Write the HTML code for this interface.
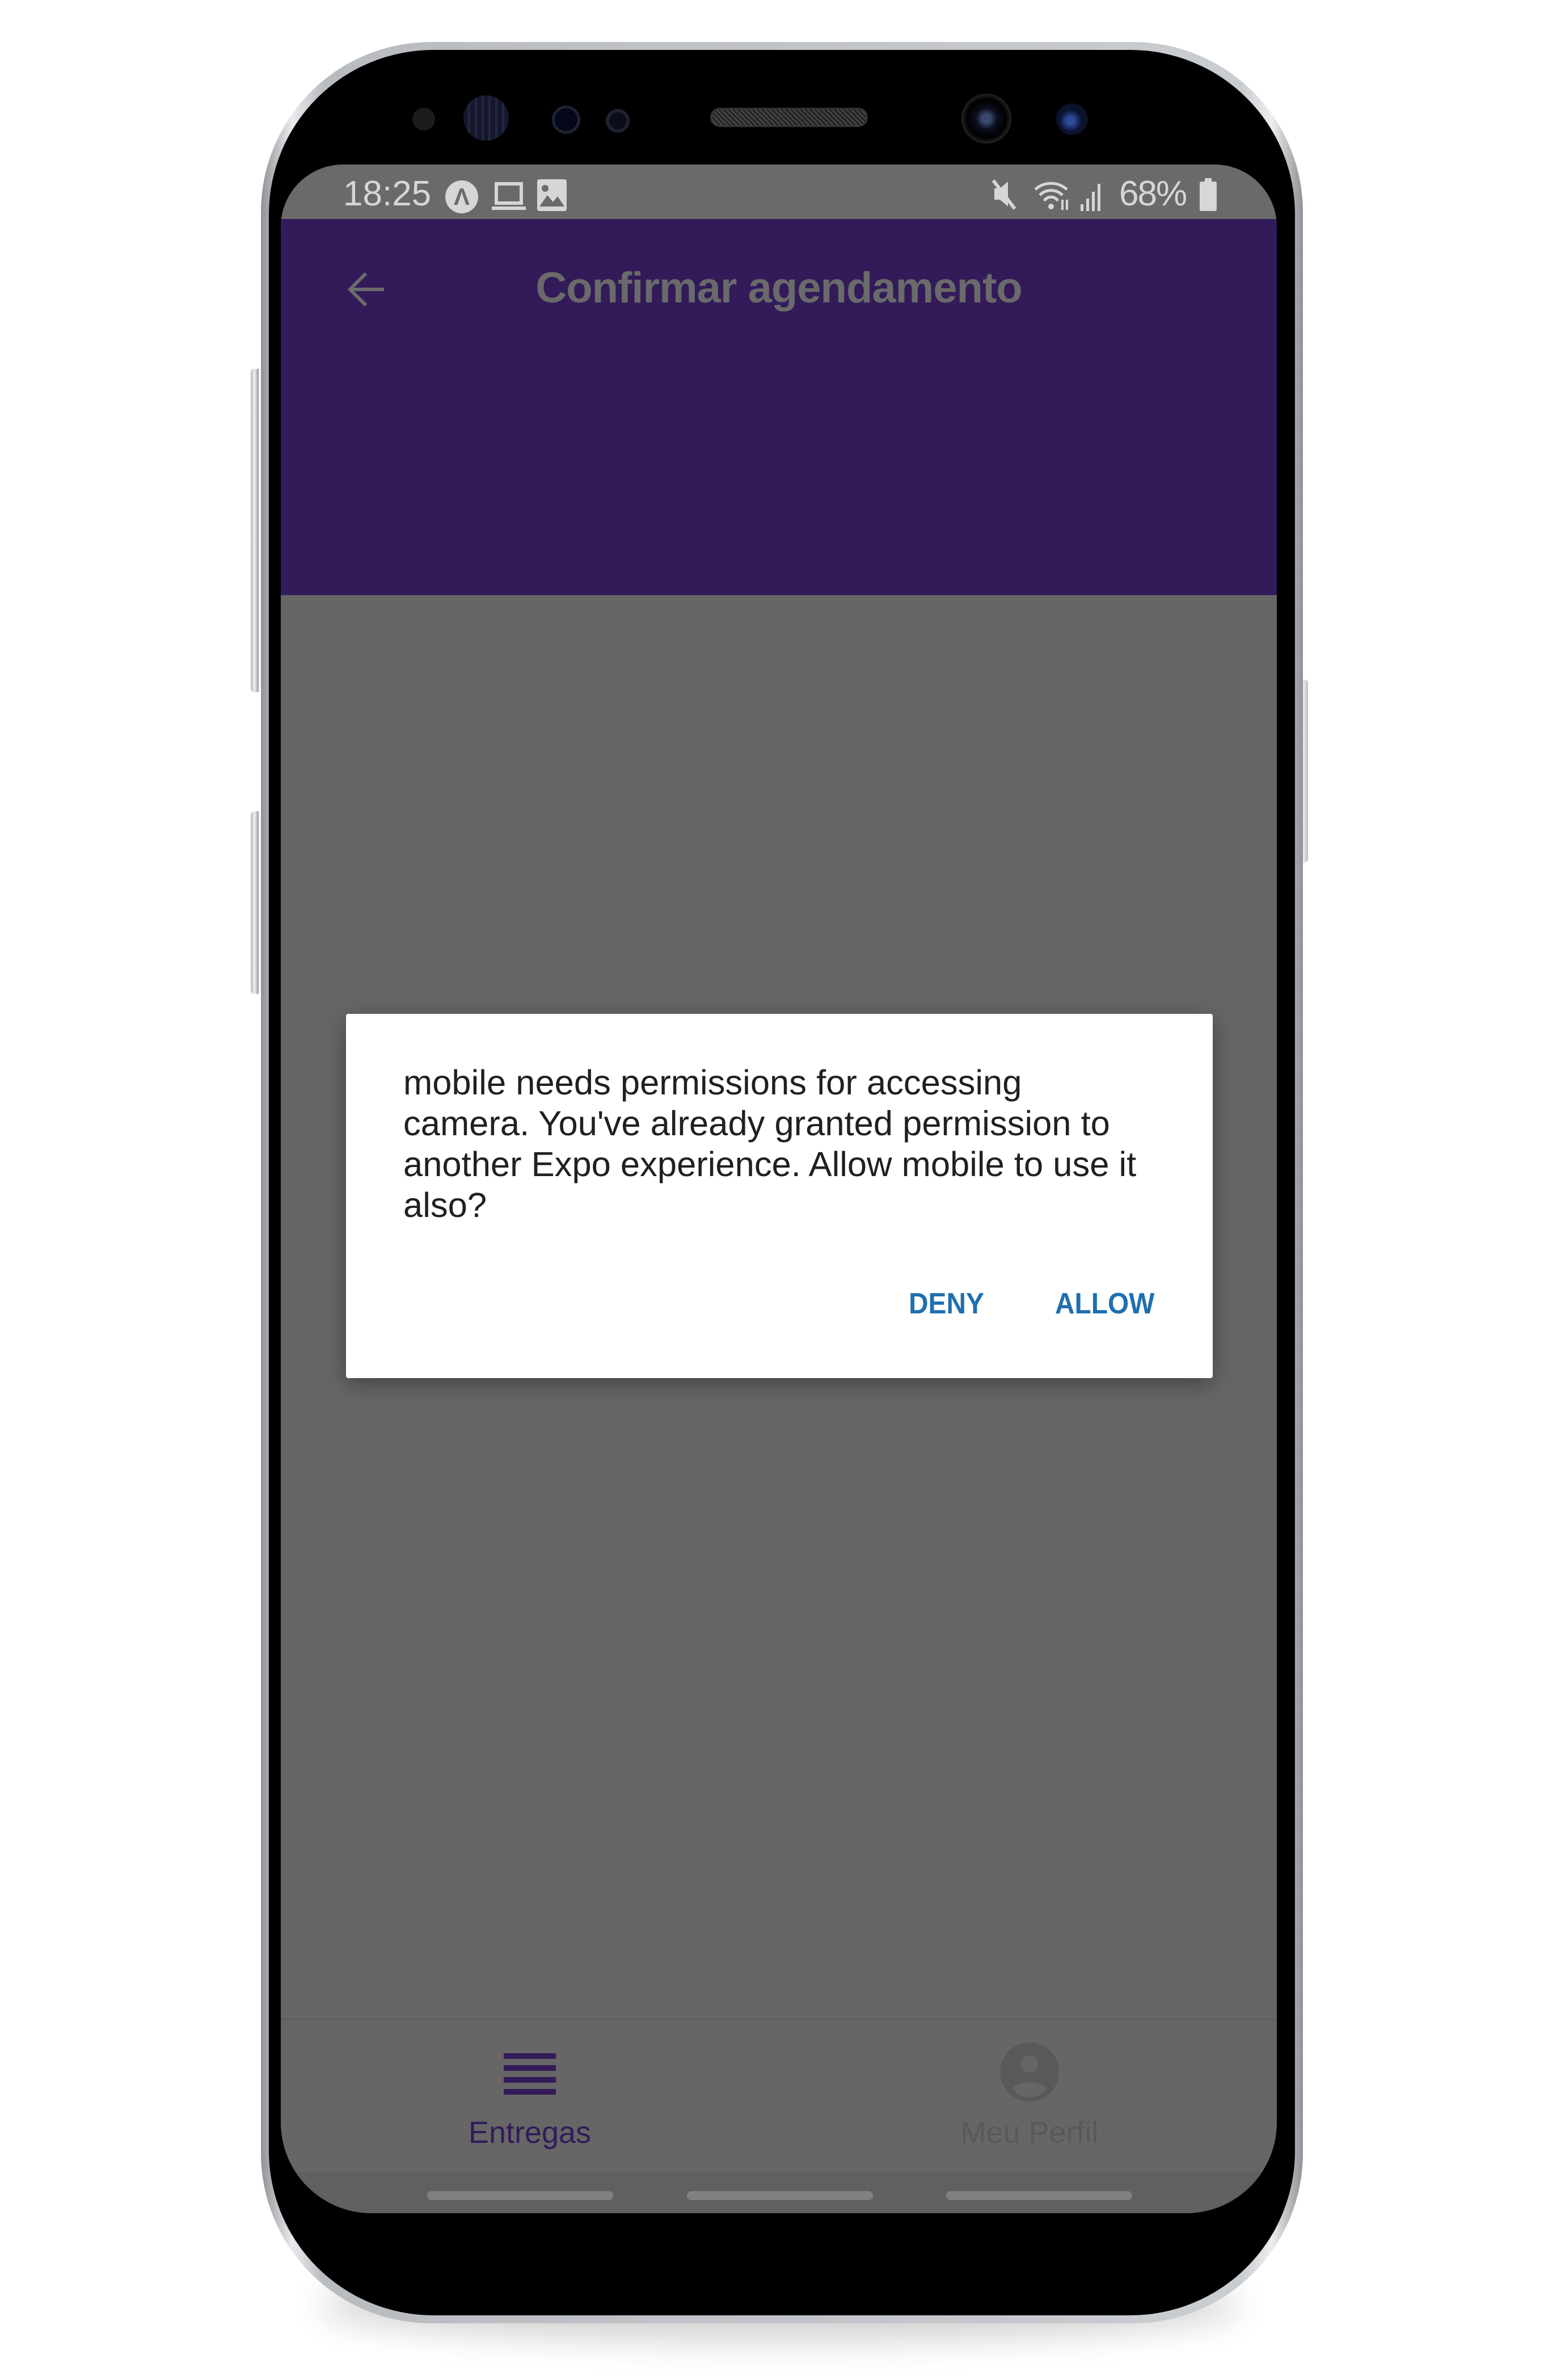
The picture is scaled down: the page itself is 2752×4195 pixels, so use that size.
<!DOCTYPE html>
<html><head><meta charset="utf-8"><style>
*{margin:0;padding:0;box-sizing:border-box}
body{width:2752px;height:4195px;background:#fff;position:relative;overflow:hidden;font-family:"Liberation Sans",sans-serif}
.a{position:absolute}
</style></head><body>
<div class="a" style="left:560px;top:4005px;width:1630px;height:120px;border-radius:50%;background:#000;opacity:.18;filter:blur(30px)"></div>
<div class="a" style="left:442px;top:650px;width:14px;height:570px;background:linear-gradient(90deg,#bbb,#eee,#999);border-radius:6px 0 0 6px"></div>
<div class="a" style="left:442px;top:1430px;width:14px;height:322px;background:linear-gradient(90deg,#bbb,#eee,#999);border-radius:6px 0 0 6px"></div>
<div class="a" style="left:2290px;top:1198px;width:16px;height:322px;background:linear-gradient(90deg,#999,#eee,#bbb);border-radius:0 6px 6px 0"></div>
<div class="a" style="left:460px;top:74px;width:1837px;height:4021px;border-radius:300px;background:linear-gradient(90deg,#8f9296,#e9ebee 3%,#b8bbbf 6%,#c9ccd0 94%,#eceef0 97%,#8f9296)"></div>
<div class="a" style="left:474px;top:88px;width:1809px;height:3993px;border-radius:290px;background:#000"></div>
<div class="a" style="left:727px;top:190px;width:40px;height:40px;border-radius:50%;background:#1c1c1e"></div>
<div class="a" style="left:817px;top:168px;width:80px;height:80px;border-radius:50%;background:repeating-linear-gradient(90deg,#15182a 0 8px,#232740 8px 12px)"></div>
<div class="a" style="left:973px;top:186px;width:50px;height:50px;border-radius:50%;background:#05081a;border:5px solid #1e2232"></div>
<div class="a" style="left:1068px;top:192px;width:42px;height:42px;border-radius:50%;background:#0a0d1c;border:6px solid #1e2232"></div>
<div class="a" style="left:1252px;top:190px;width:278px;height:34px;border-radius:17px;background:repeating-linear-gradient(45deg,#444 0 3px,#222 3px 6px);border:3px solid #333"></div>
<div class="a" style="left:1695px;top:165px;width:88px;height:88px;border-radius:50%;background:radial-gradient(circle,#3a4870 0 12%,#0b0f1e 30%,#000 55%,#222 70%,#111 100%)"></div>
<div class="a" style="left:1862px;top:182px;width:56px;height:56px;border-radius:50%;background:radial-gradient(circle at 45% 55%,#2c4b9a 0 15%,#0a1230 45%,#111 100%)"></div>
<div class="a" style="left:495px;top:290px;width:1756px;height:3611px;border-radius:110px 110px 160px 160px;overflow:hidden;background:#666">
  <div class="a" style="left:0;top:0;width:1756px;height:98px;background:#6a6a6a"></div>
  <div class="a" style="left:110px;top:12px;font-size:62px;color:#d6d6d6;line-height:80px">18:25</div>
  <div class="a" style="left:290px;top:28px;width:58px;height:58px;border-radius:50%;background:#d6d6d6;color:#6a6a6a;font-size:42px;text-align:center;line-height:58px;font-weight:bold">&#923;</div>
  <svg class="a" style="left:370px;top:28px" width="64" height="58" viewBox="0 0 64 58"><rect x="10" y="6" width="44" height="34" fill="none" stroke="#d6d6d6" stroke-width="6"/><rect x="2" y="46" width="60" height="6" fill="#d6d6d6"/></svg>
  <svg class="a" style="left:452px;top:26px" width="52" height="56" viewBox="0 0 52 56"><rect x="0" y="0" width="52" height="56" rx="4" fill="#d6d6d6"/><circle cx="14" cy="16" r="6" fill="#6a6a6a"/><path d="M4 48 L18 28 L28 40 L36 30 L48 48 Z" fill="#6a6a6a"/></svg>
  <svg class="a" style="left:1250px;top:20px" width="250" height="70" viewBox="0 0 250 70"><path d="M8 22h10l14-12v44l-14-12H8z" fill="#d6d6d6"/><path d="M6 8 L44 58" stroke="#d6d6d6" stroke-width="6"/><path d="M80 24a42 42 0 0 1 56 0M88 34a28 28 0 0 1 40 0M96 44a14 14 0 0 1 24 0" fill="none" stroke="#d6d6d6" stroke-width="5"/><circle cx="108" cy="54" r="5" fill="#d6d6d6"/><path d="M128 42v18M136 60V42" stroke="#d6d6d6" stroke-width="4"/><rect x="160" y="50" width="5" height="12" fill="#d6d6d6"/><rect x="170" y="40" width="5" height="22" fill="#d6d6d6"/><rect x="180" y="28" width="5" height="34" fill="#d6d6d6"/><rect x="190" y="14" width="5" height="48" fill="#d6d6d6"/></svg>
  <div class="a" style="left:1478px;top:12px;font-size:62px;color:#d6d6d6;line-height:80px;letter-spacing:-2px">68%</div>
  <div class="a" style="left:1620px;top:30px;width:30px;height:52px;background:#d6d6d6;border-radius:3px"></div>
  <div class="a" style="left:1629px;top:24px;width:12px;height:8px;background:#d6d6d6"></div>
  <div class="a" style="left:0;top:96px;width:1756px;height:663px;background:#331b5a"></div>
  <svg class="a" style="left:112px;top:180px" width="80" height="80" viewBox="0 0 80 80"><path d="M70 40H12M38 12L10 40l28 28" fill="none" stroke="#6c6c6c" stroke-width="6"/></svg>
  <div class="a" style="left:0;top:168px;width:1756px;text-align:center;font-size:76px;font-weight:bold;color:#6a6a6a;line-height:100px;letter-spacing:-1px">Confirmar agendamento</div>
  <div class="a" style="left:0;top:3268px;width:1756px;height:3px;background:#5e5e5e"></div>
  <div class="a" style="left:393px;top:3329px;width:92px;height:10px;background:#331b5a"></div>
  <div class="a" style="left:393px;top:3350px;width:92px;height:10px;background:#331b5a"></div>
  <div class="a" style="left:393px;top:3371px;width:92px;height:10px;background:#331b5a"></div>
  <div class="a" style="left:393px;top:3392px;width:92px;height:10px;background:#331b5a"></div>
  <div class="a" style="left:319px;top:3434px;width:240px;text-align:center;font-size:54px;color:#331b5a;line-height:70px">Entregas</div>
  <svg class="a" style="left:1268px;top:3310px" width="104" height="104" viewBox="0 0 104 104"><circle cx="52" cy="52" r="52" fill="#595959"/><circle cx="52" cy="38" r="15" fill="#666"/><path d="M22 82c8-16 52-16 60 0c-8 10-20 15-30 15s-22-5-30-15z" fill="#666"/></svg>
  <div class="a" style="left:1190px;top:3434px;width:260px;text-align:center;font-size:54px;color:#595959;line-height:70px">Meu Perfil</div>
  <div class="a" style="left:0;top:3538px;width:1756px;height:80px;background:#606060"></div>
  <div class="a" style="left:258px;top:3572px;width:328px;height:16px;border-radius:8px;background:#808080"></div>
  <div class="a" style="left:716px;top:3572px;width:328px;height:16px;border-radius:8px;background:#808080"></div>
  <div class="a" style="left:1173px;top:3572px;width:328px;height:16px;border-radius:8px;background:#808080"></div>
</div>
<div class="a" style="left:610px;top:1787px;width:1528px;height:642px;background:#fff;border-radius:4px;box-shadow:0 10px 40px rgba(0,0,0,.35)">
  <div class="a" style="left:101px;top:86px;width:1420px;font-size:61.5px;line-height:72px;color:#202020">mobile needs permissions for accessing<br>camera. You've already granted permission to<br>another Expo experience. Allow mobile to use it<br>also?</div>
  <div class="a" style="left:992px;top:476px;font-size:52px;color:#1f6fb0;font-weight:bold;line-height:70px;transform:scaleX(.92);transform-origin:left">DENY</div>
  <div class="a" style="left:1250px;top:476px;font-size:52px;color:#1f6fb0;font-weight:bold;line-height:70px;transform:scaleX(.92);transform-origin:left">ALLOW</div>
</div>
</body></html>
